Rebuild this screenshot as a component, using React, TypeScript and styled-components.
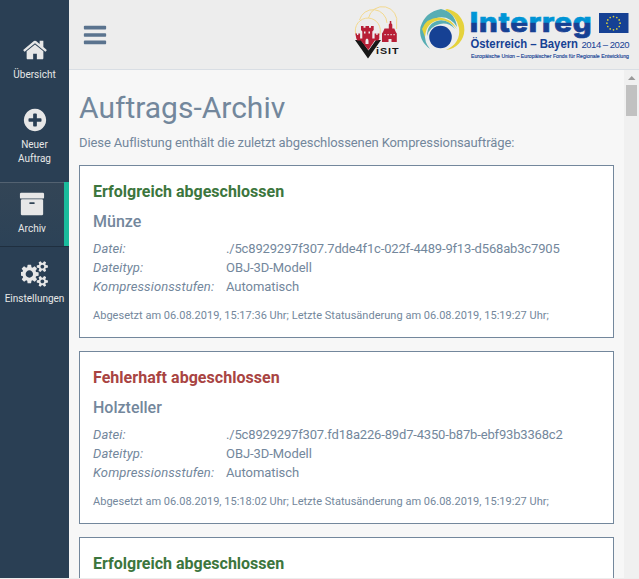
import React from 'react';
import styled, { createGlobalStyle, css } from 'styled-components';

const GlobalStyle = createGlobalStyle`
  * { box-sizing: border-box; }
  html, body { margin: 0; height: 100%; overflow: hidden; }
  body {
    background: #ededed;
    color: #73879c;
    font-family: Roboto, "Liberation Sans", sans-serif;
    font-size: 13px;
    line-height: 19px;
  }
`;

const Shell = styled.div`
  display: grid;
  grid-template-columns: 69px 1fr;
  height: 578px;
  overflow: hidden;
  background: #f7f7f7;
`;

const Sidebar = styled.nav`
  display: flex;
  flex-direction: column;
  gap: 6px;
  padding-top: 28px;
  background: #2a3f54;
`;

const NavItem = styled.a<{ $active?: boolean }>`
  display: flex;
  flex-direction: column;
  align-items: center;
  padding: 9px 0 10px;
  color: #e7e7e7;
  font-size: 10px;
  line-height: 14px;
  text-align: center;
  ${(p) =>
    p.$active &&
    css`
      border-right: 5px solid #1abb9c;
      background: linear-gradient(#334556, #2c4257);
      box-shadow: rgba(0, 0, 0, 0.25) 0 1px 0, inset rgba(255, 255, 255, 0.16) 0 1px 0;
    `}
`;

const NavIcon = styled.svg`
  display: block;
  height: 26px;
  margin-bottom: 5px;
  fill: #e7e7e7;
`;

const NavLabel = styled.span`
  white-space: pre-line;
`;

const Main = styled.div`
  display: grid;
  grid-template-rows: 70px 1fr;
  min-width: 0;
  min-height: 0;
`;

const TopBar = styled.header`
  display: flex;
  align-items: flex-start;
  justify-content: space-between;
  padding-left: 13px;
  background: #ededed;
  border-bottom: 1px solid #d9dee4;
`;

const MenuIcon = styled.svg`
  width: 26px;
  height: 26px;
  margin-top: 22px;
  fill: #5a738e;
`;

const Logos = styled.div`
  display: flex;
  height: 69px;
`;

const Logo = styled.svg`
  display: block;
  height: 69px;
`;

const Viewport = styled.div`
  display: grid;
  grid-template-columns: 1fr 15px;
  min-height: 0;
  overflow: hidden;
`;

const Content = styled.main`
  min-height: 0;
  overflow: hidden;
  padding: 18px 10px 0;
`;

const Title = styled.h1`
  margin: 0;
  font-size: 30px;
  font-weight: 400;
  line-height: 40px;
`;

const Intro = styled.p`
  margin: 5px 0 13px;
  letter-spacing: -0.1px;
`;

const Card = styled.section`
  height: 173px;
  margin-bottom: 13px;
  padding: 16px 13px 0;
  background: #fff;
  border: 1px solid #73879c;
`;

const Status = styled.h2<{ $failed?: boolean }>`
  margin: 0 0 10px;
  font-size: 16px;
  font-weight: 700;
  line-height: 20px;
  letter-spacing: ${(p) => (p.$failed ? '0.04px' : '0')};
  color: ${(p) => (p.$failed ? '#a94442' : '#3c763d')};
`;

const JobName = styled.h3`
  margin: 0 0 7px;
  font-size: 16px;
  font-weight: 500;
  line-height: 20px;
`;

const Details = styled.dl`
  display: grid;
  grid-template-columns: 133px 1fr;
  margin: 0 0 11px;
`;

const Term = styled.dt`
  font-style: italic;
  letter-spacing: 0.1px;
`;

const Value = styled.dd<{ $path?: boolean }>`
  margin: 0;
  white-space: nowrap;
  letter-spacing: ${(p) => (p.$path ? '-0.165px' : '-0.06px')};
`;

const Footnote = styled.p`
  margin: 0;
  font-size: 11px;
  line-height: 18px;
  letter-spacing: 0.02px;
  white-space: nowrap;
`;

const ScrollTrack = styled.div`
  display: flex;
  flex-direction: column;
  align-items: center;
  background: #f0f0f0;
`;

const ScrollArrow = styled.svg`
  width: 15px;
  height: 15px;
  fill: #9a9a9a;
`;

const ScrollThumb = styled.div`
  width: 11px;
  height: 31px;
  background: #c1c1c1;
`;

const paths = {
  home: 'M1472 992v480q0 26-19 45t-45 19h-384v-384h-256v384h-384q-26 0-45-19t-19-45v-480q0-1 .5-3t.5-3l575-474 575 474q1 2 1 6zm223-69l-62 74q-8 9-21 11h-3q-13 0-21-7l-692-577-692 577q-12 8-24 7-13-2-21-11l-62-74q-8-10-7-23.5t11-21.5l719-599q32-26 76-26t76 26l244 204v-195q0-14 9-23t23-9h192q14 0 23 9t9 23v408l219 182q10 8 11 21.5t-7 23.5z',
  plus: 'M1344 960v-128q0-26-19-45t-45-19h-256v-256q0-26-19-45t-45-19h-128q-26 0-45 19t-19 45v256h-256q-26 0-45 19t-19 45v128q0 26 19 45t45 19h256v256q0 26 19 45t45 19h128q26 0 45-19t19-45v-256h256q26 0 45-19t19-45zm320-64q0 209-103 385.5t-279.5 279.5-385.5 103-385.5-103-279.5-279.5-103-385.5 103-385.5 279.5-279.5 385.5-103 385.5 103 279.5 279.5 103 385.5z',
  archive: 'M1088 832q0-26-19-45t-45-19h-256q-26 0-45 19t-19 45 19 45 45 19h256q26 0 45-19t19-45zm576-192v960q0 26-19 45t-45 19h-1408q-26 0-45-19t-19-45v-960q0-26 19-45t45-19h1408q26 0 45 19t19 45zm64-448v256q0 26-19 45t-45 19h-1536q-26 0-45-19t-19-45v-256q0-26 19-45t45-19h1536q26 0 45 19t19 45z',
  bars: 'M1664 1344v128q0 26-19 45t-45 19h-1408q-26 0-45-19t-19-45v-128q0-26 19-45t45-19h1408q26 0 45 19t19 45zm0-512v128q0 26-19 45t-45 19h-1408q-26 0-45-19t-19-45v-128q0-26 19-45t45-19h1408q26 0 45 19t19 45zm0-512v128q0 26-19 45t-45 19h-1408q-26 0-45-19t-19-45v-128q0-26 19-45t45-19h1408q26 0 45 19t19 45z',
  cogs: 'M832 896q0-106-75-181t-181-75-181 75-75 181 75 181 181 75 181-75 75-181zm768 512q0-52-38-90t-90-38-90 38-38 90q0 53 37.5 90.5t90.5 37.5 90.5-37.5 37.5-90.5zm0-1024q0-52-38-90t-90-38-90 38-38 90q0 53 37.5 90.5t90.5 37.5 90.5-37.5 37.5-90.5zm-384 421v185q0 10-7 19.5t-16 10.5l-155 24q-11 35-32 76 34 48 90 115 7 11 7 20 0 12-7 19-23 30-82.5 89.5t-78.5 59.5q-11 0-21-7l-115-90q-37 19-77 31-11 108-23 155-7 24-30 24h-186q-11 0-20-7.5t-10-17.5l-23-153q-34-10-75-31l-118 89q-7 7-20 7-11 0-21-8-144-133-144-160 0-9 7-19 10-14 41-53t47-61q-23-44-35-82l-152-24q-10-1-17-9.5t-7-19.5v-185q0-10 7-19.5t16-10.5l155-24q11-35 32-76-34-48-90-115-7-11-7-20 0-12 7-20 22-30 82-89t79-59q11 0 21 7l115 90q34-18 77-32 11-108 23-154 7-24 30-24h186q11 0 20 7.5t10 17.5l23 153q34 10 75 31l118-89q8-7 20-7 11 0 21 8 144 133 144 160 0 8-7 19-12 16-42 54t-45 60q23 48 34 82l152 23q10 2 17 10.5t7 19.5zm640 533v140q0 16-149 31-12 27-30 52 51 113 51 138 0 4-4 7-122 71-124 71-8 0-46-47t-52-68q-20 2-30 2t-30-2q-14 21-52 68t-46 47q-2 0-124-71-4-3-4-7 0-25 51-138-18-25-30-52-149-15-149-31v-140q0-16 149-31 13-29 30-52-51-113-51-138 0-4 4-7 4-2 35-20t59-34 30-16q8 0 46 46.5t52 67.5q20-2 30-2t30 2q51-71 92-112l6-2q4 0 124 70 4 3 4 7 0 25-51 138 17 23 30 52 149 15 149 31zm0-1024v140q0 16-149 31-12 27-30 52 51 113 51 138 0 4-4 7-122 71-124 71-8 0-46-47t-52-68q-20 2-30 2t-30-2q-14 21-52 68t-46 47q-2 0-124-71-4-3-4-7 0-25 51-138-18-25-30-52-149-15-149-31v-140q0-16 149-31 13-29 30-52-51-113-51-138 0-4 4-7 4-2 35-20t59-34 30-16q8 0 46 46.5t52 67.5q20-2 30-2t30 2q51-71 92-112l6-2q4 0 124 70 4 3 4 7 0 25-51 138 17 23 30 52 149 15 149 31z',
};

const navigation = [
  { label: 'Übersicht', icon: paths.home, width: 1792 },
  { label: 'Neuer\nAuftrag', icon: paths.plus, width: 1792 },
  { label: 'Archiv', icon: paths.archive, width: 1792, active: true },
  { label: 'Einstellungen', icon: paths.cogs, width: 1920 },
];

const jobs = [
  {
    failed: false,
    name: 'Münze',
    file: './5c8929297f307.7dde4f1c-022f-4489-9f13-d568ab3c7905',
    created: '15:17:36',
  },
  {
    failed: true,
    name: 'Holzteller',
    file: './5c8929297f307.fd18a226-89d7-4350-b87b-ebf93b3368c2',
    created: '15:18:02',
  },
  { failed: false, name: '', file: '', created: '' },
];

const VisitLogo = () => (
  <Logo viewBox="350 0 60 69" width="60">
    <g fill="none" stroke="#f3d683" strokeWidth="0.9">
      <path d="M355.800 34A12.500 12.500 0 1 1 379.500 35" />
      <path d="M359.500 20A14 14 0 0 1 387 23" />
      <path d="M368.500 18A14.200 14.200 0 0 1 396.600 24V29" />
    </g>
    <path fill="#171717" d="M355 40h6l7.500 10.500L376 40h5l-13 18.500z" />
    <path
      fill="#b81f36"
      d="M355.300 33.500h1.700v1.500h1.300v-1.500h1.800v5h2.200v-7l-1.300-1.500v-4h2.500v1.800h2v-1.800h3.500v1.800h2v-1.800h2.700v4l-1.400 1.500v7h2.300v-5h1.700v1.500h1.300v-1.500h1.700v5l-1 2h-3.500l-6.500 9.500-7.500-9.500h-3.500l-1-2z"
    />
    <path fill="#ededed" d="M365.500 44v-3q0-2.500 1.500-2.500t1.500 2.500v3z" />
    <path fill="#ededed" d="M364 31.500h1.500v2H364zM368.500 31.500h1.500v2h-1.500z" />
    <path
      fill="#b81f36"
      d="M382 42v-8.500l1-1.500 1.500-3.500h4.300v-4l1-1.300V21h1.500v2.200l1 1.300v4h2l1.500 3.500 1 1.500V42h-5.300v-3h-3v3z"
    />
    <path fill="#ededed" d="M384.500 34h1.200v1.300h-1.200zM387.500 34h1.200v1.300h-1.200zM390.500 34h1.200v1.300h-1.200zM393.500 34h1.200v1.300h-1.200z" />
    <text
      x="376"
      y="53.800"
      fill="#171717"
      fontFamily="Liberation Sans, sans-serif"
      fontSize="9"
      fontWeight="700"
      letterSpacing="0.800"
      textLength="23.500"
      lengthAdjust="spacingAndGlyphs"
    >
      iSIT
    </text>
  </Logo>
);

const stars = Array.from({ length: 12 }, (_, i) => {
  const angle = (i * Math.PI) / 6;
  return { x: 613.5 + 6.6 * Math.sin(angle), y: 23.2 - 6.6 * Math.cos(angle) };
});

const InterregLogo = () => (
  <Logo viewBox="410 0 229 69" width="229">
    <defs>
      <linearGradient id="wordmark" gradientUnits="userSpaceOnUse" x1="0" y1="11" x2="0" y2="34">
        <stop offset="0" stopColor="#0098d8" />
        <stop offset="0.49" stopColor="#0092d4" />
        <stop offset="0.53" stopColor="#164194" />
        <stop offset="1" stopColor="#164194" />
      </linearGradient>
    </defs>
    <path fill="#e5d23c" d="M447 9A20.700 20.700 0 0 1 446 50Q461 43 459 28Q456 15 445 10z" />
    <path
      fill="#57adb3"
      d="M430 49Q418 40 420.500 27Q425 12 441 9Q455 12 457 27Q450 16 439 17.500Q426 20 425 33Q424 42 430 49z"
    />
    <path fill="#57adb3" d="M427 36Q427 23 439 20.500Q449 19 455 29Q448 22 440 24Q430 26 427 36z" />
    <path fill="#e5d23c" d="M422 29Q426 18 439 17.500Q451 18 457 29Q449 20 440 20Q426 22 425 37z" />
    <circle cx="440.500" cy="37" r="11.300" fill="#164194" />
    <text
      x="469.800"
      y="31.700"
      fill="url(#wordmark)"
      stroke="url(#wordmark)"
      strokeWidth="0.700"
      fontFamily="Inter, sans-serif"
      fontSize="26.500"
      fontWeight="800"
      letterSpacing="0.700"
      textLength="122.500"
      lengthAdjust="spacingAndGlyphs"
    >
      Interreg
    </text>
    <path fill="#164194" d="M599 13h29.500v20H599z" />
    {stars.map((s, i) => (
      <circle key={i} cx={s.x} cy={s.y} r="0.850" fill="#d9cf3a" />
    ))}
    <g fill="#164194" fontFamily="Liberation Sans, sans-serif">
      <text x="470.500" y="48.200" fontSize="12" fontWeight="700" textLength="107.500" lengthAdjust="spacingAndGlyphs">
        Österreich – Bayern
      </text>
      <text x="581.500" y="48.200" fontSize="9.500" textLength="48" lengthAdjust="spacing">
        2014 – 2020
      </text>
      <text x="471" y="58.200" fontSize="5.500" stroke="#164194" strokeWidth="0.150" textLength="158" lengthAdjust="spacingAndGlyphs">
        Europäische Union – Europäischer Fonds für Regionale Entwicklung
      </text>
    </g>
  </Logo>
);

export default function App() {
  return (
    <>
      <GlobalStyle />
      <Shell>
        <Sidebar>
          {navigation.map((item) => (
            <NavItem key={item.label} $active={item.active}>
              <NavIcon viewBox={`0 0 ${item.width} 1792`}>
                <path d={item.icon} />
              </NavIcon>
              <NavLabel>{item.label}</NavLabel>
            </NavItem>
          ))}
        </Sidebar>
        <Main>
          <TopBar>
            <MenuIcon viewBox="0 0 1792 1792">
              <path d={paths.bars} />
            </MenuIcon>
            <Logos>
              <VisitLogo />
              <InterregLogo />
            </Logos>
          </TopBar>
          <Viewport>
            <Content>
              <Title>Auftrags-Archiv</Title>
              <Intro>Diese Auflistung enthält die zuletzt abgeschlossenen Kompressionsaufträge:</Intro>
              {jobs.map((job, i) => (
                <Card key={i}>
                  <Status $failed={job.failed}>
                    {job.failed ? 'Fehlerhaft abgeschlossen' : 'Erfolgreich abgeschlossen'}
                  </Status>
                  {job.name && (
                    <>
                      <JobName>{job.name}</JobName>
                      <Details>
                        <Term>Datei:</Term>
                        <Value $path>{job.file}</Value>
                        <Term>Dateityp:</Term>
                        <Value>OBJ-3D-Modell</Value>
                        <Term>Kompressionsstufen:</Term>
                        <Value>Automatisch</Value>
                      </Details>
                      <Footnote>
                        Abgesetzt am 06.08.2019, {job.created} Uhr; Letzte Statusänderung am 06.08.2019, 15:19:27 Uhr;
                      </Footnote>
                    </>
                  )}
                </Card>
              ))}
            </Content>
            <ScrollTrack>
              <ScrollArrow viewBox="0 0 15 15">
                <path d="M4 10h7.500L7.750 6z" />
              </ScrollArrow>
              <ScrollThumb />
            </ScrollTrack>
          </Viewport>
        </Main>
      </Shell>
    </>
  );
}
